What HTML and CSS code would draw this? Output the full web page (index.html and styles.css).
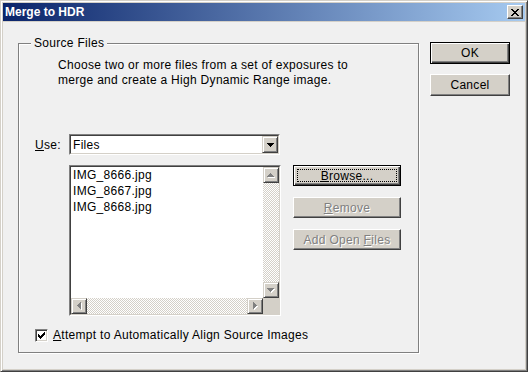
FILE: index.html
```html
<!DOCTYPE html>
<html lang="en">
<head>
  <meta charset="UTF-8">
  <title>Merge to HDR</title>
  <link rel="stylesheet" href="styles.css">
</head>
<body>
  <div class="window">
    <div class="titlebar">
      <span class="title">Merge to HDR</span>
      <span class="close">
        <svg width="8" height="7" viewBox="0 0 8 7" shape-rendering="crispEdges">
          <path d="M0 0h2v1H0zM6 0h2v1H6zM1 1h2v1H1zM5 1h2v1H5zM2 2h4v1H2zM3 3h2v1H3zM2 4h4v1H2zM1 5h2v1H1zM5 5h2v1H5zM0 6h2v1H0zM6 6h2v1H6z" fill="#000"/>
        </svg>
      </span>
    </div>

    <div class="content">
      <div class="group">
        <span class="legend">Source Files</span>
        <p class="desc">Choose two or more files from a set of exposures to<br>merge and create a High Dynamic Range image.</p>

        <div class="use-row">
          <span class="use-label"><u>U</u>se:</span>
          <div class="combo">
            <div class="combo-inner">
              <span class="combo-value">Files</span>
              <span class="combo-btn">
                <svg width="7" height="4" viewBox="0 0 7 4" shape-rendering="crispEdges">
                  <path d="M0 0h7v1H0zM1 1h5v1H1zM2 2h3v1H2zM3 3h1v1H3z" fill="#000"/>
                </svg>
              </span>
            </div>
          </div>
        </div>

        <div class="files-row">
          <div class="listbox">
            <div class="list-inner">
              <div class="list-main">
                <div class="list-items">
                  <div>IMG_8666.jpg</div>
                  <div>IMG_8667.jpg</div>
                  <div>IMG_8668.jpg</div>
                </div>
                <div class="vscroll">
                  <span class="sb-btn">
                    <svg width="8" height="5" viewBox="0 0 8 5" shape-rendering="crispEdges">
                      <path d="M4 1h1v1H4zM3 2h3v1H3zM2 3h5v1H2zM1 4h7v1H1z" fill="#fff"/>
                      <path d="M3 0h1v1H3zM2 1h3v1H2zM1 2h5v1H1zM0 3h7v1H0z" fill="#808080"/>
                    </svg>
                  </span>
                  <span class="sb-track"></span>
                  <span class="sb-btn">
                    <svg width="8" height="5" viewBox="0 0 8 5" shape-rendering="crispEdges">
                      <path d="M1 1h7v1H1zM2 2h5v1H2zM3 3h3v1H3zM4 4h1v1H4z" fill="#fff"/>
                      <path d="M0 0h7v1H0zM1 1h5v1H1zM2 2h3v1H2zM3 3h1v1H3z" fill="#808080"/>
                    </svg>
                  </span>
                </div>
              </div>
              <div class="hscroll">
                <span class="sb-btn">
                  <svg width="5" height="8" viewBox="0 0 5 8" shape-rendering="crispEdges">
                    <path d="M1 4h1v1H1zM2 3h1v3H2zM3 2h1v5H3zM4 1h1v7H4z" fill="#fff"/>
                    <path d="M0 3h1v1H0zM1 2h1v3H1zM2 1h1v5H2zM3 0h1v7H3z" fill="#808080"/>
                  </svg>
                </span>
                <span class="sb-track"></span>
                <span class="sb-btn">
                  <svg width="5" height="8" viewBox="0 0 5 8" shape-rendering="crispEdges">
                    <path d="M1 1h1v7H1zM2 2h1v5H2zM3 3h1v3H3zM4 4h1v1H4z" fill="#fff"/>
                    <path d="M0 0h1v7H0zM1 1h1v5H1zM2 2h1v3H2zM3 3h1v1H3z" fill="#808080"/>
                  </svg>
                </span>
                <span class="sb-corner"></span>
              </div>
            </div>
          </div>

          <div class="file-buttons">
            <button class="btn default focus"><u>B</u>rowse...</button>
            <button class="btn disabled"><u>R</u>emove</button>
            <button class="btn disabled">Add Open <u>F</u>iles</button>
          </div>
        </div>

        <div class="check-row">
          <span class="checkbox">
            <svg width="7" height="7" viewBox="0 0 7 7" shape-rendering="crispEdges">
              <path d="M6 0h1v3H6zM5 1h1v3H5zM4 2h1v3H4zM3 3h1v3H3zM2 4h1v3H2zM1 3h1v3H1zM0 2h1v3H0z" fill="#000"/>
            </svg>
          </span>
          <span class="check-label"><u>A</u>ttempt to Automatically Align Source Images</span>
        </div>
      </div>

      <div class="side">
        <button class="btn default">OK</button>
        <button class="btn">Cancel</button>
      </div>
    </div>
  </div>
</body>
</html>
```

FILE: styles.css
```css
body {
  margin: 0;
  font-family: "Liberation Sans", Arial, sans-serif;
  font-size: 12px;
  letter-spacing: 0.3px;
  color: #000;
  background: #d4d0c8;
}
.window {
  width: 528px;
  height: 372px;
  box-sizing: border-box;
  border: 1px solid;
  border-color: #d4d0c8 #404040 #404040 #d4d0c8;
  box-shadow: inset 1px 1px 0 #fff, inset -1px -1px 0 #808080;
  padding: 2px;
  background: #d4d0c8;
  display: flex;
  flex-direction: column;
}
.titlebar {
  height: 18px;
  margin-bottom: 1px;
  background: linear-gradient(to right, #0a246a, #a6caf0);
  display: flex;
  align-items: center;
  justify-content: space-between;
}
.title {
  color: #fff;
  font-weight: bold;
  letter-spacing: 0;
  padding-left: 2px;
}
.close {
  width: 16px;
  height: 14px;
  box-sizing: border-box;
  margin-right: 2px;
  background: #d4d0c8;
  border: 1px solid;
  border-color: #fff #404040 #404040 #fff;
  box-shadow: inset -1px -1px 0 #808080;
  display: flex;
  align-items: center;
  justify-content: center;
}
.content {
  flex: 1;
  background: #f0f0f0;
  display: flex;
  align-items: flex-start;
  padding: 21px 0 0 15px;
}
.group {
  position: relative;
  width: 401px;
  height: 310px;
  box-sizing: border-box;
  border: 1px solid #808080;
  box-shadow: inset 1px 1px 0 #fff, 1px 1px 0 #fff;
}
.legend {
  position: absolute;
  top: -8px;
  left: 12px;
  padding: 0 3px;
  background: #f0f0f0;
  line-height: 15px;
}
.desc {
  margin: 14px 0 0 39px;
  line-height: 15px;
}
.use-row {
  display: flex;
  align-items: center;
  margin: 46px 0 0 16px;
}
.use-label {
  width: 34px;
}
.combo {
  width: 211px;
  height: 21px;
  box-sizing: border-box;
  border: 1px solid;
  border-color: #808080 #fff #fff #808080;
}
.combo-inner {
  height: 100%;
  box-sizing: border-box;
  border: 1px solid;
  border-color: #404040 #d4d0c8 #d4d0c8 #404040;
  background: #fff;
  display: flex;
  align-items: center;
  justify-content: space-between;
}
.combo-value {
  padding-left: 2px;
}
.combo-btn,
.sb-btn {
  width: 16px;
  height: 17px;
  box-sizing: border-box;
  background: #d4d0c8;
  border: 1px solid;
  border-color: #d4d0c8 #404040 #404040 #d4d0c8;
  box-shadow: inset 1px 1px 0 #fff, inset -1px -1px 0 #808080;
  display: flex;
  align-items: center;
  justify-content: center;
  flex: none;
}
.sb-btn {
  height: 16px;
}
.files-row {
  display: flex;
  align-items: flex-start;
  margin: 10px 0 0 50px;
}
.listbox {
  width: 212px;
  height: 151px;
  box-sizing: border-box;
  border: 1px solid;
  border-color: #808080 #fff #fff #808080;
}
.list-inner {
  height: 100%;
  box-sizing: border-box;
  border: 1px solid;
  border-color: #404040 #d4d0c8 #d4d0c8 #404040;
  background: #fff;
  display: flex;
  flex-direction: column;
}
.list-main {
  flex: 1;
  display: flex;
}
.list-items {
  flex: 1;
  padding-left: 2px;
  line-height: 16px;
}
.vscroll {
  width: 16px;
  display: flex;
  flex-direction: column;
}
.hscroll {
  height: 16px;
  display: flex;
}
.sb-track {
  flex: 1;
  background: repeating-conic-gradient(#d4d0c8 0 25%, #fff 0 50%) 0 0 / 2px 2px;
}
.sb-corner {
  width: 16px;
  background: #d4d0c8;
}
.file-buttons {
  display: flex;
  flex-direction: column;
  gap: 11px;
  margin-left: 12px;
}
.btn {
  position: relative;
  width: 108px;
  height: 21px;
  box-sizing: border-box;
  padding: 0;
  font: inherit;
  letter-spacing: inherit;
  color: #000;
  background: #d4d0c8;
  border: 1px solid;
  border-color: #fff #404040 #404040 #fff;
  box-shadow: inset -1px -1px 0 #808080;
}
.btn.default {
  border-color: #000;
  box-shadow: inset 1px 1px 0 #fff, inset -1px -1px 0 #404040, inset -2px -2px 0 #808080;
}
.btn.focus::after {
  content: "";
  position: absolute;
  inset: 3px;
  border: 1px dotted #000;
}
.btn.disabled {
  color: #808080;
  text-shadow: 1px 1px 0 #fff;
}
.check-row {
  display: flex;
  align-items: center;
  margin: 12px 0 0 16px;
}
.checkbox {
  width: 13px;
  height: 13px;
  box-sizing: border-box;
  border: 1px solid;
  border-color: #808080 #fff #fff #808080;
  box-shadow: inset 1px 1px 0 #404040, inset -1px -1px 0 #d4d0c8;
  background: #fff;
  display: flex;
  align-items: center;
  justify-content: center;
  margin-right: 5px;
}
.side {
  display: flex;
  flex-direction: column;
  gap: 10px;
  margin: -1px 0 0 11px;
}
.side .btn {
  width: 80px;
  height: 22px;
}
```
